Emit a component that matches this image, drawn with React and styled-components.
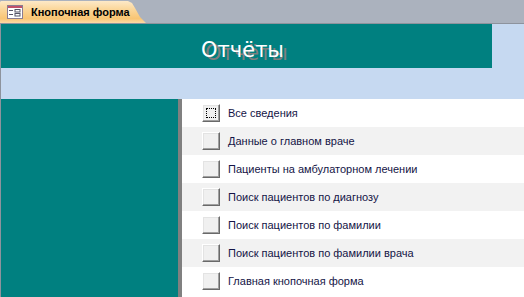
import React from 'react';
import styled, { createGlobalStyle } from 'styled-components';

const Global = createGlobalStyle`
  html, body {
    margin: 0;
    padding: 0;
    background: #ffffff;
    overflow: hidden;
  }
`;

const Page = styled.div`
  width: 524px;
  height: 297px;
  display: flex;
  flex-direction: column;
  font-family: "Liberation Sans", Arial, sans-serif;
  overflow: hidden;
`;

const TabBar = styled.div`
  height: 22px;
  padding-top: 1px;
  background: #abb2be;
  border-bottom: 1px solid #8d939d;
  display: flex;
  align-items: flex-end;
`;

const Tab = styled.div`
  width: 146px;
  height: 22px;
  display: flex;
  align-items: center;
  gap: 8px;
  padding-left: 7px;
  box-sizing: border-box;
  background: linear-gradient(#fde9c8 0%, #fbd89d 35%, #f9c574 80%, #fbd9a6 100%);
  clip-path: polygon(0 1px, 1px 0, 128px 0, 132px 2px, 135px 7px, 140px 16px, 146px 22px, 0 22px);
  font-size: 11px;
  font-weight: bold;
  color: #000;
`;

const Body = styled.div`
  flex: 1;
  display: flex;
  flex-direction: column;
  background: #c6d9f1;
  border-left: 1px solid #8d939d;
`;

const Header = styled.div`
  width: 491px;
  height: 44px;
  background: #008080;
  display: flex;
  align-items: center;
  justify-content: center;
  padding-right: 8px;
  box-sizing: border-box;
`;

const Title = styled.div`
  color: #ffffff;
  font-family: Tahoma, "DejaVu Sans", sans-serif;
  font-size: 21px;
  padding-top: 7px;
  text-shadow: 4px 3px 0 #7f7f7f;
`;

const Spacer = styled.div`
  height: 31px;
`;

const Main = styled.div`
  flex: 1;
  display: flex;
`;

const Sidebar = styled.div`
  width: 177px;
  background: #008080;
`;

const Divider = styled.div`
  width: 4px;
  background: #808080;
`;

const List = styled.div`
  flex: 1;
  background: #ffffff;
  display: flex;
  flex-direction: column;
`;

const Row = styled.div`
  height: 28px;
  display: flex;
  align-items: center;
  gap: 8px;
  padding-left: 20px;
  background: ${p => (p.$alt ? '#f2f2f2' : '#ffffff')};
  font-size: 11px;
  color: #141446;
`;

const Button = styled.div`
  width: 18px;
  height: 18px;
  box-sizing: border-box;
  background: #f0f0f0;
  border-top: 1px solid #ffffff;
  border-left: 1px solid #ffffff;
  border-right: 1px solid #696969;
  border-bottom: 1px solid #696969;
  box-shadow: inset -1px -1px 0 #a0a0a0, inset 1px 1px 0 #e3e3e3;
  padding: 3px;
`;

const Focus = styled.div`
  width: 100%;
  height: 100%;
  box-sizing: border-box;
  border: 1px dotted #000;
`;

const FormIcon = () => (
  <svg width="16" height="14" viewBox="0 0 16 14">
    <rect x="0.5" y="0.5" width="15" height="13" fill="#ffffff" stroke="#8a7d92" />
    <rect x="1" y="1" width="14" height="2" fill="#c0506a" />
    <rect x="2" y="5" width="4" height="1" fill="#556" />
    <rect x="2" y="9" width="4" height="1" fill="#556" />
    <rect x="8" y="4.5" width="5" height="2.5" fill="none" stroke="#556" strokeWidth="1" />
    <rect x="8" y="8.5" width="5" height="2.5" fill="none" stroke="#556" strokeWidth="1" />
  </svg>
);

const items = [
  'Все сведения',
  'Данные о главном враче',
  'Пациенты на амбулаторном лечении',
  'Поиск пациентов по диагнозу',
  'Поиск пациентов по фамилии',
  'Поиск пациентов по фамилии врача',
  'Главная кнопочная форма',
];

export default function App() {
  return (
    <Page>
      <Global />
      <TabBar>
        <Tab>
          <FormIcon />
          Кнопочная форма
        </Tab>
      </TabBar>
      <Body>
        <Header>
          <Title>Отчёты</Title>
        </Header>
        <Spacer />
        <Main>
          <Sidebar />
          <Divider />
          <List>
            {items.map((t, i) => (
              <Row key={t} $alt={i % 2 === 1}>
                <Button>{i === 0 && <Focus />}</Button>
                {t}
              </Row>
            ))}
          </List>
        </Main>
      </Body>
    </Page>
  );
}
